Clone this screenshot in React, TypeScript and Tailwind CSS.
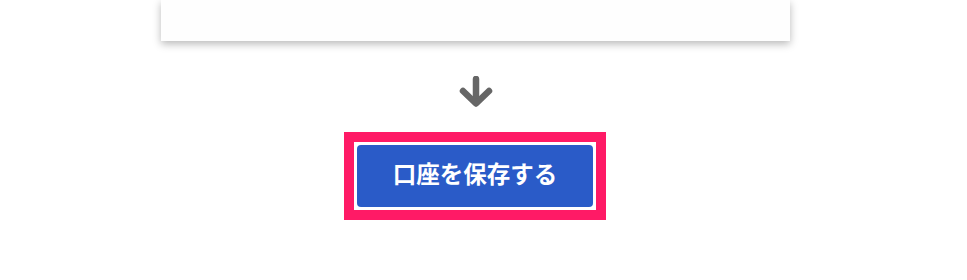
import React from "react";

export default function App() {
  return (
    <div className="w-[951px] min-h-[280px] bg-white flex flex-col items-center" style={{ fontFamily: '"Noto Sans CJK JP", "Noto Sans", sans-serif' }}>
      <div className="w-[629px] h-[41px] bg-[#fefefe] shadow-[0_3px_8px_rgba(0,0,0,0.28)]" />
      <div className="mt-[35px] h-[30px] w-[34px] flex items-center justify-center">
        <svg width="34" height="31" viewBox="0 0 34 31" fill="none">
          <path d="M17 3 V26" stroke="#666666" strokeWidth="6.5" strokeLinecap="round" />
          <path d="M4 15 L17 27.5 L30 15" stroke="#666666" strokeWidth="6.5" strokeLinecap="round" strokeLinejoin="round" />
        </svg>
      </div>
      <div className="mt-[26px] mr-[1px] border-[10px] border-[#ff1a66] p-[3px] bg-white">
        <button className="w-[236px] h-[62px] rounded-[4px] bg-[#2a5bc8] text-white font-bold text-[23.5px] leading-none flex items-center justify-center pb-[4px]">
          口座を保存する
        </button>
      </div>
    </div>
  );
}
